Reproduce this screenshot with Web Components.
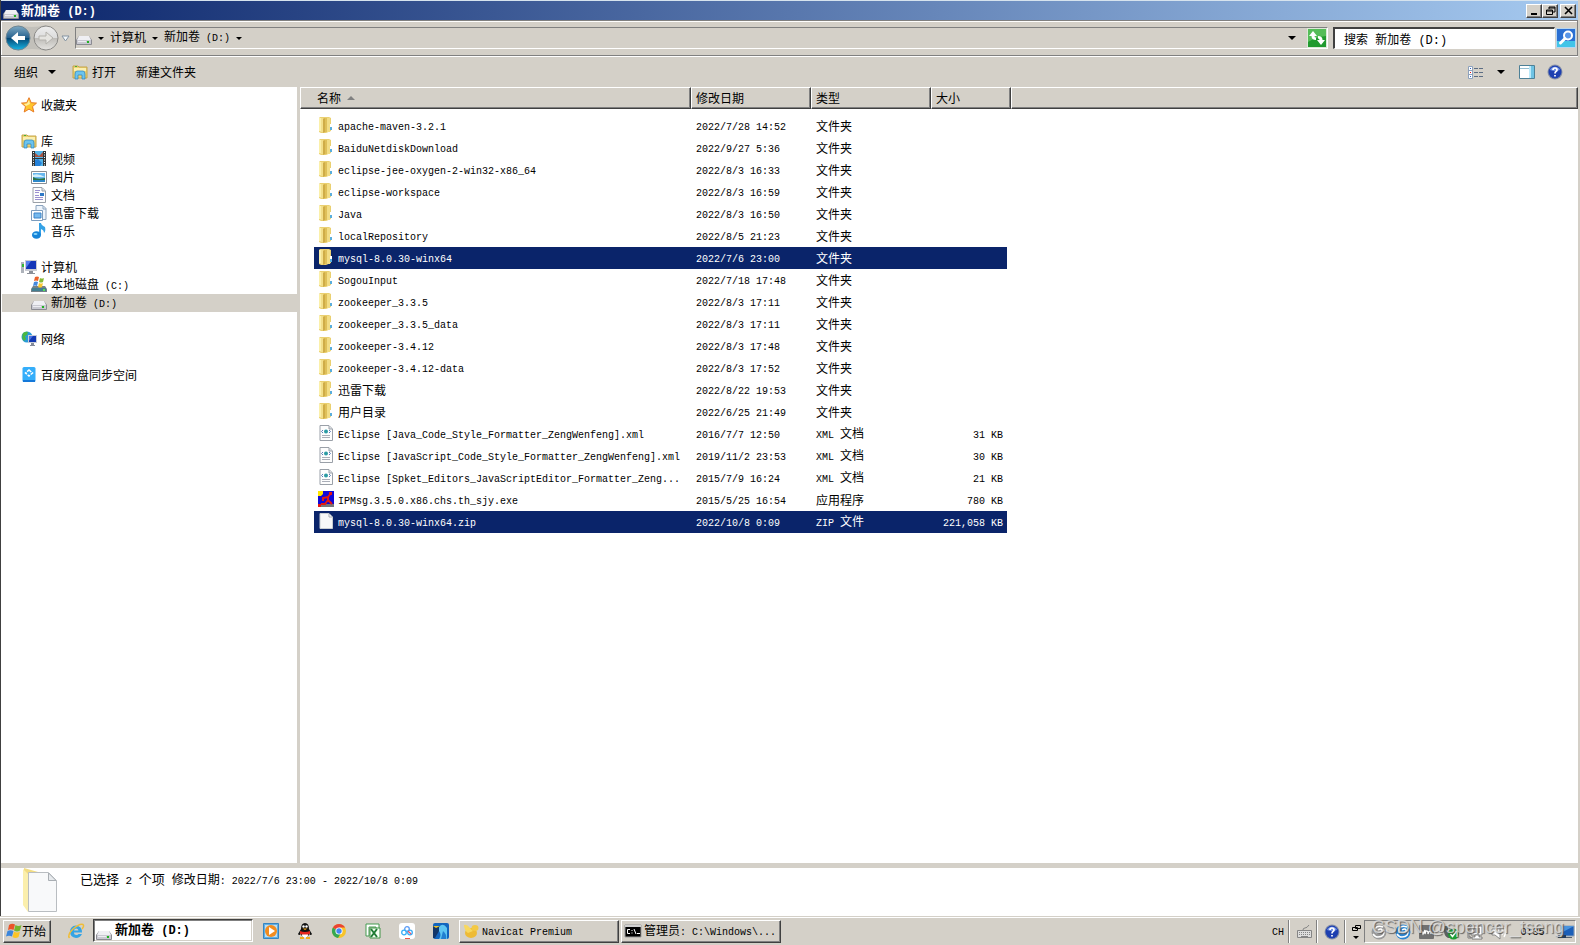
<!DOCTYPE html>
<html lang="zh-CN">
<head>
<meta charset="utf-8">
<title>新加卷 (D:)</title>
<style>
    html, body { height: 100%; margin: 0; }
    body {
        display: flex;
        flex-direction: column;
        overflow: hidden;
        font: 12px/18px "Noto Sans CJK SC", sans-serif;
        color: #000;
        background: #d4d0c8;
        --face: #d4d0c8;
        --shadow: #808080;
        --dark: #404040;
        --navy: #0a246a;
    }
    explorer-window { flex: 1; min-height: 0; }
</style>
</head>
<body>
<explorer-window>
    <title-bar slot="title" text="新加卷 (D:)"></title-bar>
    <address-bar slot="address"></address-bar>
    <command-bar slot="commands"></command-bar>
    <nav-tree slot="nav">
        <nav-item icon="star" text="收藏夹"></nav-item>
        <nav-item icon="library" text="库" gap></nav-item>
        <nav-item icon="video" text="视频" child></nav-item>
        <nav-item icon="picture" text="图片" child></nav-item>
        <nav-item icon="document" text="文档" child></nav-item>
        <nav-item icon="download" text="迅雷下载" child></nav-item>
        <nav-item icon="music" text="音乐" child></nav-item>
        <nav-item icon="computer" text="计算机" gap></nav-item>
        <nav-item icon="system" text="本地磁盘 (C:)" child></nav-item>
        <nav-item icon="drive" text="新加卷 (D:)" child selected></nav-item>
        <nav-item icon="network" text="网络" gap></nav-item>
        <nav-item icon="netdisk" text="百度网盘同步空间" gap></nav-item>
    </nav-tree>
    <file-list slot="files"></file-list>
    <details-pane slot="details"></details-pane>
</explorer-window>
<task-bar>
    <task-button icon="flag" text="开始" kind="start"></task-button>
    <task-button icon="ie" kind="quick" label="Internet Explorer"></task-button>
    <task-button icon="drive" text="新加卷 (D:)" kind="active"></task-button>
    <task-button icon="player" kind="quick" label="媒体播放器"></task-button>
    <task-button icon="penguin" kind="quick" label="QQ"></task-button>
    <task-button icon="chrome" kind="quick" label="Chrome"></task-button>
    <task-button icon="excel" kind="quick" label="Excel"></task-button>
    <task-button icon="cloud" kind="quick" label="百度网盘"></task-button>
    <task-button icon="bird" kind="quick" label="迅雷"></task-button>
    <task-button icon="navicat" text="Navicat Premium" kind="window"></task-button>
    <task-button icon="cmd" text="管理员: C:\Windows\..." kind="window"></task-button>
    <system-tray slot="tray"></system-tray>
</task-bar>

<script>
const folder = `
    <path d="M1 1l1-1h9l2 1v13l-5 2H3l-2-1z" fill="#ead071"/>
    <path d="M1 1h4v14l-4-1z" fill="#fbf0aa"/><path d="M3 1h2v14H3z" fill="#f3df8b"/>
    <path d="M5 2l2-1v14l-2 1z" fill="#cfac47"/><path d="M7 1h2v14H7z" fill="#dfc05a"/>
    <path d="M9 1h3v14H9z" fill="#f2dd86"/><path d="M12 7h2v6h-2z" fill="#fff"/><path d="M12 10h2v3h-2z" fill="#5aaedc"/>`
const hardDrive = `
    <path d="M3 6h10l3 4v4q0 1-1 1H1q-1 0-1-1v-4z" fill="#8b8b92"/>
    <path d="M3 6h10l2 4H1z" fill="#efeff3"/><path d="M1 10h14v4H1z" fill="#c9c9d1"/>
    <path d="M11 11h2v2h-2z" fill="#1fb321"/><path d="M2 11h8v1H2z" fill="#ededf1"/>`
const monitor = `
    <path d="M4 1h12v11H4z" fill="#c9cbd2"/><path d="M5 2h10v8H5z" fill="#1436b8"/>
    <path d="M5 2h5l-5 7z" fill="#537cec"/><path d="M8 12h4v2h2v1H6v-1h2z" fill="#8b9099"/>`
const sheet = `<path d="M2 .5h9l3.500 3.500v11.500H2z" fill="#fdfdfd" stroke="#9aa0a8"/><path d="M11 1v3h3" fill="#e2e6ea" stroke="#9aa0a8"/>`
const book = `
    <path d="M1 2h5l1 1h8v11H1z" fill="#ecd273" stroke="#c6a548"/><path d="M2 4h12v3H2z" fill="#faefb0"/>
    <path d="M3 2h2v1H3z" fill="#45b035"/><path d="M3 10q0-3 2-3h6q2 0 2 3v5h-3v-4H6v4H3z" fill="#6cc4ee" stroke="#2b83bb" stroke-width=".7"/>`
const help = `
    <circle cx="8" cy="8" r="7.500" fill="#8a93a8"/><circle cx="8" cy="8" r="6.500" fill="#1d3fb0"/>
    <path d="M3 6a5.500 5.500 0 0 1 10 0q-5 2-10 0z" fill="#7191e6"/>
    <path d="M6 6q0-2 2-2t2 2q0 1-1 1.500T8 9.500M8 11v1.500" fill="none" stroke="#fff" stroke-width="1.700"/>`

const icons = {
    folder, help, drive: hardDrive,
    star: `<path d="M8 .7l2.200 5 5.300.4-4 3.500 1.300 5.400L8 12.100 3.200 15l1.300-5.400-4-3.500 5.300-.4z" fill="#ffc62e" stroke="#e87b25"/><path d="M8 3l1 4-4 2-2-2 3-.500z" fill="#fff0a0"/>`,
    library: book,
    video: `<path d="M1 0h14v15H1z" fill="#303638"/><path d="M4 0h8v15H4z" fill="#54b4e8"/><path d="M4 2l4 3 4-4v5H4z" fill="#a65543"/><path d="M4 7h8v1H4z" fill="#303638"/><path d="M4 9l3-1 4 4-2 3H4z" fill="#2480d8"/><path d="M2.500 1v14M13.500 1v14" stroke="#fff" stroke-dasharray="1 1.500"/>`,
    picture: `<path d="M.5 2.500h15v12H.5z" fill="#fff" stroke="#8a8f95"/><path d="M2 4h12v9H2z" fill="#67b7ee"/><path d="M2 6q5-2 12 2H2z" fill="#d0eefb"/><path d="M2 8q4 3 12 1v2H2z" fill="#2a7348"/><path d="M2 11h12v2H2z" fill="#2e88c8"/>`,
    document: sheet + `<path d="M4 3.500h5M4 5.500h4M4 8.500h4M4 10.500h8M4 12.500h8" stroke="#9a8fd0"/><path d="M9 6h4v3H9z" fill="#2e78c6"/>`,
    download: `<path d="M5 .5h7l3 3v11H5z" fill="#edf4fb" stroke="#8aa2bd"/><path d="M12 1v3h3" fill="none" stroke="#8aa2bd"/><path d="M.5 5.500h11v10H.5z" fill="#fff" stroke="#7c9cbd"/><path d="M3 8h7v5H3z" fill="#76b9ee" stroke="#3c83c7"/>`,
    music: `<path d="M8 0h2q0 2 4 4 1 4-1 6 0-3-3-4v6H8z" fill="#35a2e6"/><ellipse cx="5.500" cy="12" rx="4.500" ry="3.800" fill="#1684d8"/><ellipse cx="4.500" cy="11" rx="2" ry="1" fill="#8cd9fc"/>`,
    computer: monitor + `<path d="M0 3h3v11H0z" fill="#aeb3bb"/><path d="M1 5h2v3H1z" fill="#35b735"/>`,
    system: `<path d="M2 9h12l2 3v3H0v-3z" fill="#758188"/><path d="M1 11h14v3H1z" fill="#427e91"/><path d="M12 12h2v2h-2z" fill="#55e055"/><path d="M4 0q2-1 4 0L7 4q-2-1-4 0z" fill="#ec622b"/><path d="M9 1q2 1 4 0l-1 4q-2 1-4 0z" fill="#86b934"/><path d="M3 5q2-1 4 0l-1 4q-2-1-4 0z" fill="#4489dd"/><path d="M8 6q2 1 4 0l-1 4q-2 1-4 0z" fill="#f8c830"/>`,
    network: `<circle cx="6" cy="6" r="5.500" fill="#299bd7"/><path d="M2 2q3-2 5-1L6 4 4 5l1 3-2 2q-3-3-1-8z" fill="#49b742"/><path d="M7 4h9v8H7z" fill="#c7ccd8"/><path d="M8 5h7v6H8z" fill="#1238b3"/><path d="M8 5h4l-4 5z" fill="#4a73e4"/><path d="M10 12h3v2h1v1H9v-1h1z" fill="#838a9a"/>`,
    netdisk: `<rect x="1.500" width="13" height="15" rx="1.500" fill="#35aefa"/><path d="M2 13h12v2H2z" fill="#1478d9"/><path d="M8 3l3.500 3L8 9 4.500 6z" fill="none" stroke="#fff" stroke-width="1.500" stroke-dasharray="3 1"/>`,
    xml: sheet + `<path d="M4 10.500h8M4 12.500h8" stroke="#aaaeb8"/><path d="M5 5L3.500 6.500 5 8M11 5l1.500 1.500L11 8" fill="none" stroke="#5879ba"/><circle cx="8" cy="6.500" r="2" fill="#2b9ba3"/>`,
    ipmsg: `<path d="M0 0h16v16H0z" fill="#1008d8"/><path d="M0 0h5v3L3 5H0z" fill="#ffe500"/><path d="M3 13h13v3H2z" fill="#77777b"/><path d="M13 2l-3 4v3l4 4M10 6L5 7v3M10 9l-3 4H3" fill="none" stroke="#e51711" stroke-width="2"/><path d="M11 1h3v3h-3zM0 13h3v3H0z" fill="#e51711"/>`,
    blank: `<path d="M2 .5h9l3.500 3.500v11.500H2z" fill="#f8f8f8" stroke="#c8cdd2"/><path d="M11 1v3h3" fill="#fff" stroke="#aaaeb4"/>`,
    views: `<path d="M.5 2.500h4v12h-4z" fill="#fff" stroke="#8ea2bd"/><path d="M1 6.500h3M1 10.500h3" stroke="#8ea2bd"/><path d="M2 4h1v1H2zM2 12h1v1H2z" fill="#2961c4"/><path d="M2 8h1v1H2z" fill="#e01010"/><path d="M6 4.500h4M11 4.500h4M6 8.500h4M11 8.500h4M6 12.500h4M11 12.500h4" stroke="#5c6d84"/>`,
    pane: `<path d="M.5 1.500h15v13H.5z" fill="#fff" stroke="#4d8097"/><path d="M1 4h9v1H1z" fill="#94bed2"/><path d="M10 2h5v12h-5z" fill="#6fc3e4"/><path d="M10 2h2v12h-2z" fill="#bceafa"/>`,
    refresh: `<path d="M0 0h20v20H0z" fill="#dce9d8"/><path d="M1 1h18v18H1z" fill="#219a2f"/><path d="M1 1h18v7Q9 9 1 14z" fill="#55bd58"/><path id="r" d="M6 3L2 8h2.500q0 4 4.500 4V9.500q-1.500 0-1.500-1.500H10z" fill="#fff"/><path d="M14 17l4-5h-2.500q0-4-4.500-4v2.500q1.500 0 1.500 1.500H10z" fill="#fff"/>`,
    search: `<path d="M0 0h20v20H0z" fill="#b7d6ef"/><path d="M1 1h18v18H1z" fill="#2b6fd2"/><path d="M1 13h18v6H1z" fill="#41c4e8"/><circle cx="12" cy="7.500" r="4" fill="#5a96e8" stroke="#fff" stroke-width="2"/><path d="M9 10.500L4.500 15" stroke="#fff" stroke-width="3" stroke-linecap="round"/>`,
    flag: `<path d="M3 2q3-2 6-.500L7.500 7Q5 5.500 2 7z" fill="#eb5428"/><path d="M9.500 2q3 2 6 0L14 7.500q-3 2-6 0z" fill="#75b52c"/><path d="M1.500 8q3-1.500 6 0L6 13.500q-3-1.500-6 0z" fill="#3a86dc"/><path d="M8 8.500q3 2 6 0l-1.500 5.500q-3 2-6 0z" fill="#fbc424"/>`,
    ie: `<path d="M14 11q-2 4-6 4-6-1-6-6 0-6 6-6.500Q14 3 14 9.500H6q0 2.500 2.500 2.500 1.500 0 2-1zM6 7.500h4.500Q10 5.500 8.200 5.500T6 7.500z" fill="#35a4e5" fill-rule="evenodd"/><path d="M1.500 15Q-1 12 5 6q7-6 10-4.500Q16.500 3 14 6" fill="none" stroke="#efbd38" stroke-width="1.500"/>`,
    player: `<path d="M.5.500h15v15H.5z" fill="#62aee2" stroke="#3385c4"/><path d="M2 2h12v12H2z" fill="#b7dff7"/><circle cx="8" cy="8" r="6" fill="#f28c20"/><path d="M6 4l6 4-6 4z" fill="#fff"/>`,
    penguin: `<path d="M4 6q0-6 4-6t4 6l3 5q-1 2-3 0-1 4-4 4t-4-4q-2 2-3 0z" fill="#121212"/><ellipse cx="8" cy="12" rx="3" ry="3" fill="#fff"/><path d="M3 8q5 2 10 0v3q-5 1-10 0z" fill="#e6261f"/><path d="M3 14h4v2H3zM9 14h4v2H9zM5.500 5.500h5L8 7z" fill="#f5a91c"/><circle cx="6.500" cy="3.500" r="1.200" fill="#fff"/><circle cx="9.500" cy="3.500" r="1.200" fill="#fff"/>`,
    chrome: `<circle cx="8" cy="8" r="7" fill="#f7c42b"/><path d="M8 8L1.900 4.500A7 7 0 0 0 7 15l3-5z" fill="#34a853"/><path d="M8 8L1.900 4.500A7 7 0 0 1 14.100 4.500H8z" fill="#ea4335"/><circle cx="8" cy="8" r="3.600" fill="#fff"/><circle cx="8" cy="8" r="2.700" fill="#4285f4"/>`,
    excel: `<path d="M1 1h13v13h-3V4H4v9H1z" fill="#fff" stroke="#459b51"/><path d="M5 5h10v10H5z" fill="#f5fff3" stroke="#419447"/><path d="M6 6l6 8M12 6l-6 8" stroke="#207c35" stroke-width="2"/>`,
    cloud: `<rect width="16" height="16" rx="3" fill="#fff"/><circle cx="8" cy="6" r="2.300" fill="none" stroke="#5b9cf5" stroke-width="1.300"/><circle cx="5" cy="9.500" r="2.300" fill="none" stroke="#38aef6" stroke-width="1.300"/><circle cx="11" cy="9.500" r="2.300" fill="none" stroke="#38aef6" stroke-width="1.300"/><path d="M9 8l3 3" stroke="#ef5266" stroke-width="1.300"/><path d="M6 15h5v1H6z" fill="#e8574a"/>`,
    bird: `<rect width="16" height="16" rx="2" fill="#1265be"/><path d="M0 3h7l-1 5-4 7H0z" fill="#123669"/><path d="M6 4q4-5 8 1v11H6q3-4 0-8z" fill="#5dc5f2"/><path d="M0 3h7L3 5z" fill="#edc52a"/><path d="M10 8q4 3 3 8H8z" fill="#227fd1"/>`,
    navicat: `<ellipse cx="8" cy="10" rx="6" ry="5" fill="#eebb35"/><path d="M1 2q3-1 6 3l3 3-5 2Q1 7 1 2z" fill="#f8d85e"/><ellipse cx="12" cy="5" rx="3.500" ry="3" fill="#f4c944"/>`,
    cmd: `<path d="M0 2h16v12H0z" fill="#000" stroke="#999"/><path d="M0 2h16v2H0z" fill="#d0d0d0"/><path d="M5 6.500H2.500v4H5M7 7v1M7 9.500v1M9 6l2 5M12 10.500h3" fill="none" stroke="#fff"/>`,
    keyboard: `<path d="M1.500 6.500h14v7h-14z" fill="#ddd" stroke="#858585"/><path d="M3 8.500h11M3 10.500h11" stroke="#858585" stroke-dasharray="1 1"/><path d="M5 12.500h7M7 6q0-2 2-2t4-3" fill="none" stroke="#858585"/>`,
    restore: `<path d="M3.500-.5h5v3h-5zM.5 1.500h5v3h-5z" fill="#d4d0c8" stroke="#000"/><path d="M1 10h6l-3 3z" fill="#000"/>`,
    swirl: `<circle cx="8" cy="8" r="7.500" fill="currentColor"/><path d="M12 3Q6 1 4 5q-1 4 4 4 4-1 3-3T7 6M13 6q1 7-6 7-3 0-5-3" fill="none" stroke="#fff" stroke-width="1.500"/>`,
    vm: `<rect y="1" width="15" height="14" rx="1" fill="#717171"/><path d="M2 6l2 4 2-4v4q1-5 3-2v2q1-4 3-2v2" fill="none" stroke="#fff" stroke-width="1.300"/>`,
    safe: `<path d="M1 2h4v5h5v7H5q-4-2-4-7z" fill="#5c6260"/><circle cx="10.500" cy="10" r="5.500" fill="#1e9f32"/><path d="M7.500 10l2 2.500L13.500 7" fill="none" stroke="#fff" stroke-width="1.500"/>`,
    lan: `<path d="M4 2h11v9H4z" fill="#fff" stroke="#555" stroke-width=".7"/><path d="M6 4h7v5H6z" fill="#a4a4a4"/><path d="M8 11h4v2h3v2H5v-2h3zM1 2h2v3H2v8h2v1H1z" fill="#fff" stroke="#555" stroke-width=".7"/>`,
    sound: `<path d="M1 5h3l5-4v14l-5-4H1z" fill="#fff" stroke="#888"/><path d="M11 5q2 3 0 6M13 3q3 5 0 10" fill="none" stroke="#fff" stroke-width="1.300"/>`,
    desktop: `<path d="M3 2h13v10H3z" fill="#1b5fb8" stroke="#8fa3b8"/><path d="M3 2h13L3 9z" fill="#4994df"/><path d="M0 11h8v3H0z" fill="#233d5e"/><path d="M8 13h6v1H8z" fill="#55606c"/><path d="M2 12h2v1H2z" fill="#e8d24a"/>`,
    bigfolder: `<path d="M3 0l14 4v4H8v36l-6-8z" fill="#f2dc83"/><path d="M2 1l5 5v38l-5-7z" fill="#fbefad"/><path d="M7.500 4.500h20l8 8v31h-28z" fill="#f8f9fa" stroke="#b9bdc1"/><path d="M27.500 5v7.500H35z" fill="#e7eaed" stroke="#a9aeb3"/>`,
    minimize: `<path d="M3 8h6v2H3z"/>`,
    maximize: `<path d="M5 2h6v5H9M5 2v2M5 3h6M2.500 5h6v4.500h-6zM2 6h7" fill="none" stroke="#000"/>`,
    close: `<path d="M3 2l7 7M10 2L3 9" stroke="#000" stroke-width="1.600"/>`
}

// ASCII runs take a 10px monospace so that two of them fill one ideograph
const mixed = (text) =>
    `<span class="t">${text.replace(/[\x20-\x7e]+/g, (run) => `<span class="a">${run}</span>`)}</span>`

const base = `
    :host, *, *::before, *::after { box-sizing: border-box; }
    .t { white-space: pre; }
    .a { font-family: "Liberation Mono", monospace; font-size: 10px; }
    button {
        font: inherit;
        color: inherit;
        background: none;
        border: 0;
        padding: 0;
        display: inline-flex;
        align-items: center;
    }
    .arrow { border: 3px solid transparent; border-top-color: #000; border-bottom: 0; }
    .wide { border-width: 4px 4px 0; }
`

class BaseElement extends HTMLElement {
    constructor() {
        super()
        this.attachShadow({ mode: 'open' })
    }
    connectedCallback() {
        this.shadowRoot.innerHTML = `<style>${base}${this.styles()}</style>${this.markup()}`
    }
    attr(name) {
        return this.getAttribute(name) || ''
    }
}

customElements.define(
    'ui-icon',
    class extends BaseElement {
        styles() {
            const size = this.attr('size') || 16
            return `
                :host { display: block; flex: none; width: ${size}px; height: ${size}px; }
                svg { display: block; width: 100%; height: 100%; overflow: visible; }
            `
        }
        markup() {
            const size = this.attr('size') || 16
            return `<svg viewBox="0 0 ${size} ${size}" aria-hidden="true">${icons[this.attr('name')]}</svg>`
        }
    }
)

customElements.define(
    'explorer-window',
    class extends BaseElement {
        styles() {
            return `
                :host {
                    display: flex;
                    flex-direction: column;
                    border-left: 1px solid var(--dark);
                    border-right: 2px solid var(--face);
                }
                .main { flex: 1; min-height: 0; display: flex; background: #fff; }
                .nav { flex: none; width: 299px; border-right: 3px solid var(--face); }
                .files { flex: 1; min-width: 0; }
            `
        }
        markup() {
            return `
                <slot name="title"></slot>
                <slot name="address"></slot>
                <slot name="commands"></slot>
                <div class="main">
                    <div class="nav"><slot name="nav"></slot></div>
                    <div class="files"><slot name="files"></slot></div>
                </div>
                <slot name="details"></slot>
            `
        }
    }
)

customElements.define(
    'title-bar',
    class extends BaseElement {
        styles() {
            return `
                :host {
                    display: flex;
                    align-items: center;
                    height: 20px;
                    padding: 0 2px;
                    border-top: 1px solid #d6e3ee;
                    color: #fff;
                    background: linear-gradient(90deg, #0a246a, #a6caf0);
                    font-weight: bold;
                    font-size: 13px;
                }
                .a { font-size: 12px; }
                ui-icon { margin: 2px 2px 0 0; }
                .t { flex: 1; }
                button {
                    width: 16px;
                    height: 14px;
                    justify-content: center;
                    background: var(--face);
                    border: 1px solid;
                    border-color: #fff var(--dark) var(--dark) #fff;
                    box-shadow: inset -1px -1px var(--shadow);
                }
                button ui-icon { margin: 0; }
                button:last-child { margin-left: 2px; }
            `
        }
        markup() {
            return `
                <ui-icon name="drive"></ui-icon>
                ${mixed(this.attr('text'))}
                <button aria-label="最小化"><ui-icon name="minimize" size="12"></ui-icon></button>
                <button aria-label="还原"><ui-icon name="maximize" size="12"></ui-icon></button>
                <button aria-label="关闭"><ui-icon name="close" size="12"></ui-icon></button>
            `
        }
    }
)

customElements.define(
    'address-bar',
    class extends BaseElement {
        styles() {
            return `
                :host {
                    display: flex;
                    align-items: center;
                    height: 36px;
                    padding: 0 1px 0 4px;
                    border: solid var(--shadow);
                    border-width: 1px 1px 1px 0;
                    box-shadow: inset 1px 1px #fff, 0 1px #fff;
                }
                .travel { display: block; width: 54px; height: 28px; }
                .travel svg { display: block; }
                .crumbs {
                    flex: 1;
                    display: flex;
                    align-items: center;
                    height: 22px;
                    margin-left: 16px;
                    border: 1px solid;
                    border-color: var(--shadow) #fff #fff var(--shadow);
                }
                .crumbs .arrow { margin: 0 6px; }
                .crumbs .t { margin-top: -2px; }
                .crumbs .drop { margin: 0 11px 0 auto; }
                .search { display: flex; align-items: center; gap: 1px; margin-left: 5px; }
                input {
                    width: 222px;
                    height: 22px;
                    padding: 0 9px;
                    border: solid;
                    border-width: 2px 1px 1px 2px;
                    border-color: var(--dark) #fff #fff var(--dark);
                    font: 12px "Liberation Mono", "Noto Sans CJK SC", monospace;
                }
            `
        }
        markup() {
            return `
                <div class="travel">
                    <svg width="66" height="28" viewBox="0 0 66 28">
                        <defs>
                            <linearGradient id="blue" x2="0" y2="1">
                                <stop stop-color="#7da9c4"/><stop offset=".48" stop-color="#2a6490"/>
                                <stop offset=".5" stop-color="#064572"/><stop offset="1" stop-color="#17b5e5"/>
                            </linearGradient>
                            <linearGradient id="grey" x2="0" y2="1">
                                <stop stop-color="#eee"/><stop offset=".48" stop-color="#ddd"/>
                                <stop offset=".5" stop-color="#bdbbb7"/><stop offset="1" stop-color="#e5e4e1"/>
                            </linearGradient>
                        </defs>
                        <path d="M13 1q14 4 28 0v26q-14-4-28 0z" fill="#c2c0ba"/>
                        <circle cx="13" cy="14" r="12" fill="url(#blue)" stroke="#6f8794"/>
                        <path d="M20 12h-7V8l-7 6 7 6v-4h7z" fill="#fff"/>
                        <circle cx="41" cy="14" r="12" fill="url(#grey)" stroke="#8b8a87"/>
                        <path d="M34 12h7V8l7 6-7 6v-4h-7z" fill="#e5e4e0" stroke="#b4b2ad"/>
                        <path d="M57 12h7l-3.500 5z" fill="#f3f7fa" stroke="#8493a1"/>
                    </svg>
                </div>
                <nav class="crumbs" aria-label="地址">
                    <ui-icon name="drive"></ui-icon>
                    <i class="arrow"></i>
                    <button>${mixed('计算机')}</button><i class="arrow"></i>
                    <button>${mixed('新加卷 (D:)')}</button><i class="arrow"></i>
                    <i class="arrow wide drop"></i>
                    <button aria-label="刷新"><ui-icon name="refresh" size="20"></ui-icon></button>
                </nav>
                <div class="search">
                    <input type="text" aria-label="搜索" value="搜索 新加卷 (D:)">
                    <button aria-label="开始搜索"><ui-icon name="search" size="20"></ui-icon></button>
                </div>
            `
        }
    }
)

customElements.define(
    'command-bar',
    class extends BaseElement {
        styles() {
            return `
                :host { display: flex; align-items: center; height: 31px; padding: 0 15px 0 13px; }
                button { gap: 4px; }
                .organize { gap: 10px; margin-right: 16px; }
                .create { margin: 0 auto 0 20px; }
                .views { gap: 13px; margin-right: 14px; }
                .pane { margin-right: 12px; }
            `
        }
        markup() {
            return `
                <button class="organize">${mixed('组织')}<i class="arrow wide"></i></button>
                <button><ui-icon name="library"></ui-icon>${mixed('打开')}</button>
                <button class="create">${mixed('新建文件夹')}</button>
                <button class="views" aria-label="视图"><ui-icon name="views"></ui-icon><i class="arrow wide"></i></button>
                <button class="pane" aria-label="预览窗格"><ui-icon name="pane"></ui-icon></button>
                <button aria-label="帮助"><ui-icon name="help"></ui-icon></button>
            `
        }
    }
)

customElements.define(
    'nav-tree',
    class extends BaseElement {
        styles() {
            return `:host { display: block; padding: 9px 0 0 1px; }`
        }
        markup() {
            return `<nav aria-label="导航"><slot></slot></nav>`
        }
    }
)

customElements.define(
    'nav-item',
    class extends BaseElement {
        styles() {
            return `
                :host { display: block; }
                :host([gap]) { margin-top: 18px; }
                :host([selected]) { background: var(--face); }
                a {
                    display: flex;
                    align-items: center;
                    gap: 4px;
                    height: 18px;
                    padding-left: 19px;
                    color: inherit;
                    text-decoration: none;
                }
                :host([child]) a { padding-left: 29px; }
            `
        }
        markup() {
            return `<a href="#"><ui-icon name="${this.attr('icon')}"></ui-icon>${mixed(this.attr('text'))}</a>`
        }
    }
)

const files = [
    ['folder', 'apache-maven-3.2.1', '2022/7/28 14:52', '文件夹', ''],
    ['folder', 'BaiduNetdiskDownload', '2022/9/27 5:36', '文件夹', ''],
    ['folder', 'eclipse-jee-oxygen-2-win32-x86_64', '2022/8/3 16:33', '文件夹', ''],
    ['folder', 'eclipse-workspace', '2022/8/3 16:59', '文件夹', ''],
    ['folder', 'Java', '2022/8/3 16:50', '文件夹', ''],
    ['folder', 'localRepository', '2022/8/5 21:23', '文件夹', ''],
    ['folder', 'mysql-8.0.30-winx64', '2022/7/6 23:00', '文件夹', '', true],
    ['folder', 'SogouInput', '2022/7/18 17:48', '文件夹', ''],
    ['folder', 'zookeeper_3.3.5', '2022/8/3 17:11', '文件夹', ''],
    ['folder', 'zookeeper_3.3.5_data', '2022/8/3 17:11', '文件夹', ''],
    ['folder', 'zookeeper-3.4.12', '2022/8/3 17:48', '文件夹', ''],
    ['folder', 'zookeeper-3.4.12-data', '2022/8/3 17:52', '文件夹', ''],
    ['folder', '迅雷下载', '2022/8/22 19:53', '文件夹', ''],
    ['folder', '用户目录', '2022/6/25 21:49', '文件夹', ''],
    ['xml', 'Eclipse [Java_Code_Style_Formatter_ZengWenfeng].xml', '2016/7/7 12:50', 'XML 文档', '31 KB'],
    ['xml', 'Eclipse [JavaScript_Code_Style_Formatter_ZengWenfeng].xml', '2019/11/2 23:53', 'XML 文档', '30 KB'],
    ['xml', 'Eclipse [Spket_Editors_JavaScriptEditor_Formatter_Zeng...', '2015/7/9 16:24', 'XML 文档', '21 KB'],
    ['ipmsg', 'IPMsg.3.5.0.x86.chs.th_sjy.exe', '2015/5/25 16:54', '应用程序', '780 KB'],
    ['blank', 'mysql-8.0.30-winx64.zip', '2022/10/8 0:09', 'ZIP 文件', '221,058 KB', true]
]

customElements.define(
    'file-list',
    class extends BaseElement {
        styles() {
            return `
                :host { display: block; }
                table { width: 100%; table-layout: fixed; border-collapse: separate; border-spacing: 0; }
                .name { width: 391px; }
                .date, .type { width: 120px; }
                .size { width: 80px; }
                th {
                    height: 22px;
                    padding: 0 4px;
                    font-weight: normal;
                    text-align: left;
                    background: var(--face);
                    border: 1px solid;
                    border-color: #fff var(--dark) var(--dark) #fff;
                    box-shadow: inset -1px -1px var(--shadow);
                }
                th.name { padding-left: 16px; }
                .sort {
                    display: inline-block;
                    margin: 0 0 3px 6px;
                    border: 4px solid transparent;
                    border-bottom-color: var(--shadow);
                    border-top: 0;
                }
                tbody::before { content: ""; display: block; height: 6px; }
                td { height: 22px; padding: 0; }
                td div { display: flex; align-items: center; gap: 4px; height: 22px; padding-left: 5px; }
                td ui-icon { margin-bottom: 2px; }
                td:first-child div { margin-left: 14px; padding-left: 4px; }
                td:nth-child(4) div { justify-content: flex-end; margin-right: 4px; padding-right: 4px; }
                .selected div { color: #fff; background: var(--navy); }
            `
        }
        markup() {
            const row = ([icon, name, date, type, size, selected]) => `
                <tr${selected ? ' class="selected"' : ''}>
                    <td><div><ui-icon name="${icon}"></ui-icon>${mixed(name)}</div></td>
                    <td><div>${mixed(date)}</div></td>
                    <td><div>${mixed(type)}</div></td>
                    <td><div>${mixed(size)}</div></td>
                    <td></td>
                </tr>`
            return `
                <table>
                    <thead>
                        <tr>
                            <th class="name">名称<i class="sort"></i></th>
                            <th class="date">修改日期</th>
                            <th class="type">类型</th>
                            <th class="size">大小</th>
                            <th></th>
                        </tr>
                    </thead>
                    <tbody>${files.map(row).join('')}</tbody>
                </table>
            `
        }
    }
)

customElements.define(
    'details-pane',
    class extends BaseElement {
        styles() {
            return `
                :host {
                    display: flex;
                    height: 53px;
                    padding-left: 20px;
                    border-top: 5px solid var(--face);
                    background: #fff;
                }
                .text { display: flex; align-items: center; gap: 7px; height: 24px; margin-left: 11px; }
                .count { font-size: 13px; }
                .count .a { font-size: 11px; }
            `
        }
        markup() {
            return `
                <ui-icon name="bigfolder" size="48"></ui-icon>
                <div class="text">
                    <span class="count">${mixed('已选择 2 个项')}</span>
                    ${mixed('修改日期: 2022/7/6 23:00 - 2022/10/8 0:09')}
                </div>
            `
        }
    }
)

customElements.define(
    'task-button',
    class extends BaseElement {
        styles() {
            return `
                :host { display: block; flex: none; }
                button { height: 23px; gap: 3px; border: 1px solid transparent; }
                .start, .window {
                    border-color: #fff var(--dark) var(--dark) #fff;
                    box-shadow: inset -1px -1px var(--shadow);
                }
                .start { gap: 0; width: 48px; padding-left: 2px; margin-right: 8px; }
                .quick { width: 34px; justify-content: center; }
                .window, .active { width: 160px; padding-left: 3px; overflow: hidden; }
                .window { margin: 0 1px; }
                .active {
                    margin-right: 1px;
                    padding-left: 2px;
                    background: #fff;
                    font-weight: bold;
                    font-size: 13px;
                    border-color: var(--dark) #fff #fff var(--dark);
                    box-shadow: inset 1px 1px var(--shadow), inset -1px -1px var(--face);
                }
                .active ui-icon { margin-top: 5px; }
                .active .a { font-size: 12px; }
            `
        }
        markup() {
            const text = this.attr('text')
            const label = this.attr('label') || text
            return `
                <button class="${this.attr('kind')}" aria-label="${label}">
                    <ui-icon name="${this.attr('icon')}"></ui-icon>${text ? mixed(text) : ''}
                </button>
            `
        }
    }
)

customElements.define(
    'task-bar',
    class extends BaseElement {
        styles() {
            return `
                :host {
                    display: flex;
                    align-items: center;
                    height: 29px;
                    padding: 1px 4px 0 3px;
                    border-top: 1px solid var(--face);
                    box-shadow: inset 0 1px #fff;
                }
                .tray { margin-left: auto; }
            `
        }
        markup() {
            return `<slot></slot><div class="tray"><slot name="tray"></slot></div>`
        }
    }
)

customElements.define(
    'system-tray',
    class extends BaseElement {
        styles() {
            return `
                :host { display: flex; align-items: center; position: relative; }
                .sep { width: 2px; height: 23px; border-left: 1px solid var(--shadow); background: #fff; margin: 0 6px 0 4px; }
                .box {
                    display: flex;
                    align-items: center;
                    gap: 8px;
                    width: 212px;
                    height: 23px;
                    padding: 0 1px 0 6px;
                    border: 1px solid;
                    border-color: var(--shadow) #fff #fff var(--shadow);
                }
                .off { color: #9a9a9a; }
                .on { color: #2d86d1; }
                time { margin: 0 auto; }
                .mark {
                    position: absolute;
                    right: 12px;
                    top: -4px;
                    font: 18px/22px "Liberation Sans", sans-serif;
                    color: rgba(225, 225, 225, .8);
                    text-shadow: 1px 1px 1px rgba(70, 70, 70, .8);
                    pointer-events: none;
                }
            `
        }
        markup() {
            return `
                ${mixed('CH')}
                <i class="sep"></i>
                <ui-icon name="keyboard"></ui-icon>
                <i class="sep"></i>
                <ui-icon name="help"></ui-icon>
                <i class="sep"></i>
                <ui-icon name="restore" size="12"></ui-icon>
                <div class="box">
                    <ui-icon class="off" name="swirl"></ui-icon>
                    <ui-icon class="on" name="swirl"></ui-icon>
                    <ui-icon name="vm"></ui-icon>
                    <ui-icon name="safe"></ui-icon>
                    <ui-icon name="lan"></ui-icon>
                    <ui-icon name="sound"></ui-icon>
                    <time>${mixed('0:35')}</time>
                    <ui-icon name="desktop"></ui-icon>
                </div>
                <span class="mark">CSDN @spencer_tseng</span>
            `
        }
    }
)
</script>
</body>
</html>
